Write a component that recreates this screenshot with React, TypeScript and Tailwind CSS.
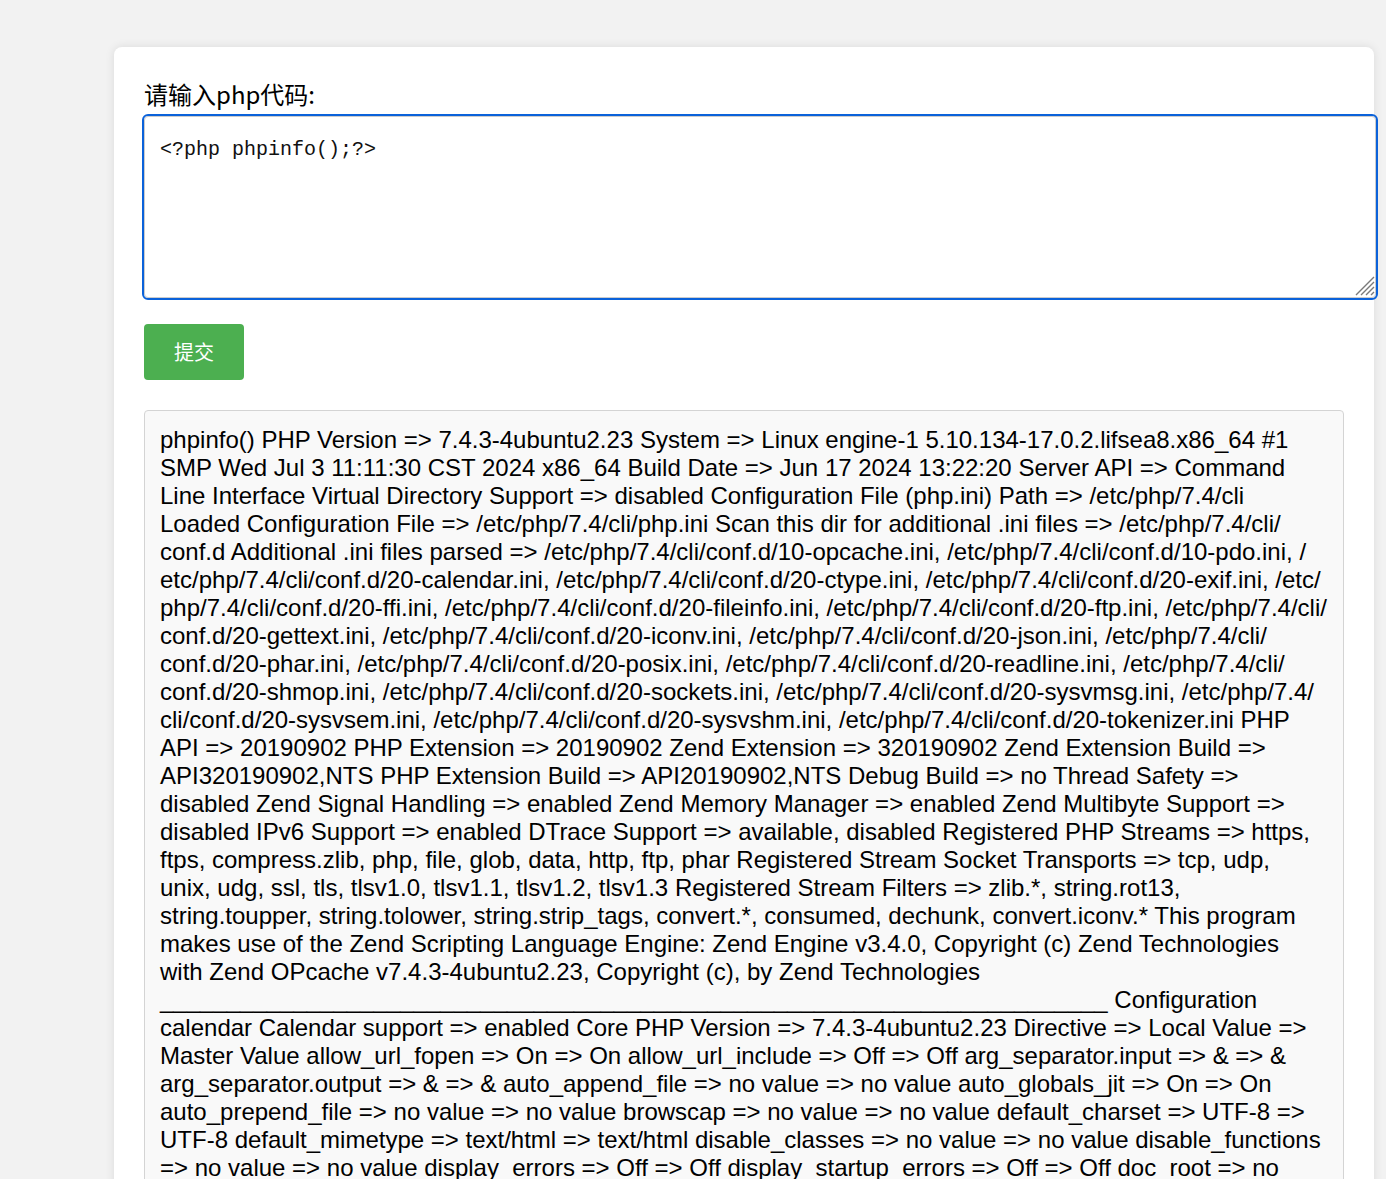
import { useState } from "react";

const RAW_TEXT =
  "phpinfo() PHP Version => 7.4.3-4ubuntu2.23 System => Linux engine-1 5.10.134-17.0.2.lifsea8.x86_64 #1 SMP Wed Jul 3 11:11:30 CST 2024 x86_64 Build Date => Jun 17 2024 13:22:20 Server API => Command Line Interface Virtual Directory Support => disabled Configuration File (php.ini) Path => /etc/php/7.4/cli Loaded Configuration File => /etc/php/7.4/cli/php.ini Scan this dir for additional .ini files => /etc/php/7.4/cli/conf.d Additional .ini files parsed => /etc/php/7.4/cli/conf.d/10-opcache.ini, /etc/php/7.4/cli/conf.d/10-pdo.ini, /etc/php/7.4/cli/conf.d/20-calendar.ini, /etc/php/7.4/cli/conf.d/20-ctype.ini, /etc/php/7.4/cli/conf.d/20-exif.ini, /etc/php/7.4/cli/conf.d/20-ffi.ini, /etc/php/7.4/cli/conf.d/20-fileinfo.ini, /etc/php/7.4/cli/conf.d/20-ftp.ini, /etc/php/7.4/cli/conf.d/20-gettext.ini, /etc/php/7.4/cli/conf.d/20-iconv.ini, /etc/php/7.4/cli/conf.d/20-json.ini, /etc/php/7.4/cli/conf.d/20-phar.ini, /etc/php/7.4/cli/conf.d/20-posix.ini, /etc/php/7.4/cli/conf.d/20-readline.ini, /etc/php/7.4/cli/conf.d/20-shmop.ini, /etc/php/7.4/cli/conf.d/20-sockets.ini, /etc/php/7.4/cli/conf.d/20-sysvmsg.ini, /etc/php/7.4/cli/conf.d/20-sysvsem.ini, /etc/php/7.4/cli/conf.d/20-sysvshm.ini, /etc/php/7.4/cli/conf.d/20-tokenizer.ini PHP API => 20190902 PHP Extension => 20190902 Zend Extension => 320190902 Zend Extension Build => API320190902,NTS PHP Extension Build => API20190902,NTS Debug Build => no Thread Safety => disabled Zend Signal Handling => enabled Zend Memory Manager => enabled Zend Multibyte Support => disabled IPv6 Support => enabled DTrace Support => available, disabled Registered PHP Streams => https, ftps, compress.zlib, php, file, glob, data, http, ftp, phar Registered Stream Socket Transports => tcp, udp,\nunix, udg, ssl, tls, tlsv1.0, tlsv1.1, tlsv1.2, tlsv1.3 Registered Stream Filters => zlib.*, string.rot13, string.toupper, string.tolower, string.strip_tags, convert.*, consumed, dechunk, convert.iconv.* This program makes use of the Zend Scripting Language Engine: Zend Engine v3.4.0, Copyright (c) Zend Technologies with Zend OPcache v7.4.3-4ubuntu2.23, Copyright (c), by Zend Technologies " +
  "_".repeat(71) +
  " Configuration calendar Calendar support => enabled Core PHP Version => 7.4.3-4ubuntu2.23 Directive => Local Value => Master Value allow_url_fopen => On => On allow_url_include => Off => Off arg_separator.input => & => & arg_separator.output => & => & auto_append_file => no value => no value auto_globals_jit => On => On auto_prepend_file => no value => no value browscap => no value => no value default_charset => UTF-8 => UTF-8 default_mimetype => text/html => text/html disable_classes => no value => no value disable_functions => no value => no value display_errors => Off => Off display_startup_errors => Off => Off doc_root => no value => no value docref_ext => no value => no value docref_root => no value => no value enable_dl => On => On enable_post_data_reading => On => On error_append_string => no value => no value error_log => no value => no value error_prepend_string => no value => no value error_reporting => no value => no value expose_php => On => On extension_dir => /usr/lib/php/20190902 => /usr/lib/php/20190902";

// allow a line break after every slash, like the original page wraps
const OUTPUT_TEXT = RAW_TEXT.replace(/\//g, "/\u200B");

export default function App() {
  const [code, setCode] = useState("<?php phpinfo();?>");

  return (
    <div className="min-h-screen bg-[#f2f2f2] pl-[114px] pt-[47px] font-['Liberation_Sans','Noto_Sans_CJK_SC',sans-serif]">
      <div className="w-[1260px] rounded-[8px] bg-white p-[30px] shadow-[0_0_10px_rgba(0,0,0,0.1)]">
        {/* Code input */}
        <label className="mb-[5px] block text-[24px] leading-[34px] text-black font-['Noto_Sans_CJK_SC','Liberation_Sans',sans-serif]">
          请输入php代码:
        </label>
        <div className="relative">
          <textarea
            value={code}
            onChange={(e) => setCode(e.target.value)}
            className="box-content block h-[150px] w-full resize-none rounded-[4px] border border-[#ccc] bg-white px-[15px] pt-[18px] pb-[12px] text-[20px] leading-[30px] text-[#111] outline-2 outline-solid outline-[#0b62da] font-['Liberation_Mono',monospace]"
          />
          {/* Resize grip */}
          <svg
            viewBox="0 0 22 22"
            className="pointer-events-none absolute bottom-[2px] left-[1209px] h-[22px] w-[22px]"
            stroke="#7a7a7a"
            strokeWidth="1.4"
          >
            <path d="M3 21L21 3M8 21L21 8M13 21L21 13M18 21L21 18" />
          </svg>
        </div>

        <button className="mt-[26px] flex h-[56px] w-[100px] items-center justify-center rounded-[4px] bg-[#4caf50] text-[20px] text-white font-['Noto_Sans_CJK_SC',sans-serif]">
          提交
        </button>

        {/* Result */}
        <div className="mt-[30px] whitespace-pre-line rounded-[4px] border border-[#d4d4d4] bg-[#f9f9f9] p-[15px] text-[24px] leading-[28px] text-black">
          {OUTPUT_TEXT}
        </div>
      </div>
    </div>
  );
}
